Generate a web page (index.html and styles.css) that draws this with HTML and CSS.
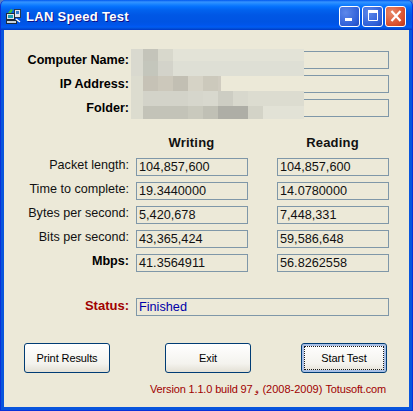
FILE: index.html
```html
<!DOCTYPE html>
<html lang="en">
<head>
<meta charset="utf-8">
<title>LAN Speed Test</title>
<link rel="stylesheet" href="styles.css">
</head>
<body>
<div class="window">
  <header class="titlebar">
    <svg class="app-icon" width="17" height="17" viewBox="0 0 17 17">
      <rect x="9.500" y="1.500" width="6" height="8" fill="#dfe6ee" stroke="#26384a"/>
      <rect x="11" y="3" width="3" height="3" fill="#2f79c9"/>
      <path d="M3 5 L6 1 L8 2 L6 5Z" fill="#3fbf3f"/>
      <rect x="1.500" y="5.500" width="8" height="6" fill="#dfe6ee" stroke="#1d2b3a"/>
      <rect x="3" y="7" width="5" height="3" fill="#18a0b8"/>
      <rect x="1.500" y="12.500" width="10" height="3" fill="#c9d2dc" stroke="#1d2b3a"/>
      <path d="M11 11 L15 14" stroke="#fff" stroke-width="1.500"/>
    </svg>
    <h1 class="title">LAN Speed Test</h1>
    <div class="controls">
      <span class="ctl ctl-min"><svg width="18" height="18" viewBox="0 0 18 18"><rect x="4" y="11" width="7" height="3" fill="#fff"/></svg></span>
      <span class="ctl ctl-max"><svg width="18" height="18" viewBox="0 0 18 18"><path d="M4.500 3.500h9v10h-9z" fill="none" stroke="#fff"/><rect x="4" y="3" width="10" height="3" fill="#fff"/></svg></span>
      <span class="ctl ctl-close"><svg width="18" height="18" viewBox="0 0 18 18"><path d="M4.500 4 L13.500 14 M13.500 4 L4.500 14" stroke="#fff" stroke-width="2.200"/></svg></span>
    </div>
  </header>
  <main class="client">
    <section class="info">
      <div class="info-row"><label class="label strong">Computer Name:</label><div class="field"></div></div>
      <div class="info-row"><label class="label strong">IP Address:</label><div class="field"></div></div>
      <div class="info-row"><label class="label strong">Folder:</label><div class="field"></div></div>
    </section>
    <section class="metrics">
      <div></div><div class="col-head">Writing</div><div class="col-head">Reading</div>
      <div class="label raised">Packet length:</div><div class="field">104,857,600</div><div class="field">104,857,600</div>
      <div class="label raised">Time to complete:</div><div class="field">19.3440000</div><div class="field">14.0780000</div>
      <div class="label raised">Bytes per second:</div><div class="field">5,420,678</div><div class="field">7,448,331</div>
      <div class="label raised">Bits per second:</div><div class="field">43,365,424</div><div class="field">59,586,648</div>
      <div class="label raised strong">Mbps:</div><div class="field">41.3564911</div><div class="field">56.8262558</div>
    </section>
    <section class="info-row status-row">
      <div class="label strong status-label">Status:</div><div class="field status-value">Finished</div>
    </section>
    <section class="actions">
      <button class="btn">Print Results</button>
      <button class="btn btn-exit">Exit</button>
      <button class="btn btn-start">Start Test</button>
    </section>
    <footer class="version">Version 1.1.0 build 97 <bdi class="mark">و</bdi> (2008-2009) Totusoft.com</footer>
  </main>
  <svg class="mosaic" width="173" height="70" viewBox="0 0 173 70" aria-hidden="true">
    <g>
      <rect x="0" y="0" width="12" height="12" fill="#d9d9cf"/><rect x="12" y="0" width="15" height="12" fill="#c4c4ba"/><rect x="27" y="0" width="15" height="12" fill="#d8d8cc"/><rect x="42" y="0" width="131" height="12" fill="#e3e3d7"/>
      <rect x="0" y="12" width="12" height="15" fill="#d9d9cf"/><rect x="12" y="12" width="15" height="15" fill="#c4c6bc"/><rect x="27" y="12" width="15" height="15" fill="#d3d3ca"/><rect x="42" y="12" width="131" height="15" fill="#dedfd5"/>
      <rect x="0" y="27" width="12" height="15" fill="#dcdccf"/><rect x="12" y="27" width="15" height="15" fill="#c6c2b6"/><rect x="27" y="27" width="15" height="15" fill="#ccc8bb"/><rect x="42" y="27" width="15" height="15" fill="#c2bfb3"/><rect x="57" y="27" width="15" height="15" fill="#d6d3c6"/><rect x="72" y="27" width="15" height="15" fill="#ccc9bc"/>
      <rect x="87" y="27" width="3" height="15" fill="#d0ccc0"/>
      <rect x="0" y="42" width="12" height="15" fill="#dcdccf"/><rect x="12" y="42" width="45" height="15" fill="#d3d3c9"/><rect x="57" y="42" width="15" height="15" fill="#d6d6cc"/><rect x="72" y="42" width="15" height="15" fill="#d8d8ce"/><rect x="87" y="42" width="15" height="15" fill="#cdcdc3"/><rect x="102" y="42" width="15" height="15" fill="#d8d8cd"/><rect x="117" y="42" width="56" height="15" fill="#dcdcd0"/>
      <rect x="0" y="57" width="12" height="13" fill="#dcdccf"/><rect x="12" y="57" width="45" height="13" fill="#c3c3b8"/><rect x="57" y="57" width="15" height="13" fill="#c9c9bd"/><rect x="72" y="57" width="15" height="13" fill="#c0c0b5"/><rect x="87" y="57" width="30" height="13" fill="#aeaea6"/><rect x="117" y="57" width="15" height="13" fill="#d3d3c7"/><rect x="132" y="57" width="41" height="13" fill="#e2e2d6"/>
    </g>
  </svg>
</div>
</body>
</html>
```
FILE: styles.css
```css
* { box-sizing: border-box; }
html, body { margin: 0; padding: 0; background: #5a7fc0; }
body { width: 413px; height: 411px; overflow: hidden; font-family: "Liberation Sans", Arial, sans-serif; }

.window {
  position: relative;
  width: 413px;
  height: 411px;
  display: flex;
  flex-direction: column;
  border-radius: 6px 6px 0 0;
  overflow: hidden;
  background: #0855dd;
  border: solid #0831d9;
  border-width: 0 1px 1px 1px;
}

.titlebar {
  height: 30px;
  margin: 0 -1px;
  flex: none;
  display: flex;
  align-items: center;
  padding: 0 7px 0 5px;
  background: linear-gradient(180deg, #0058ee 0, #3593ff 2px, #288eff 3px, #127dff 5px, #036ffc 7px, #0262ee 10px, #0057e5 15px, #0054e3 22px, #0055eb 25px, #005bf5 27px, #0256dd 28px, #0038c8 30px);
}
.app-icon { flex: none; margin-top: 2px; }
.title {
  margin: 2px 0 0 4px;
  font-size: 13px;
  font-weight: bold;
  letter-spacing: .3px;
  color: #fff;
  text-shadow: 1px 1px 0 #0f1089;
}
.controls { margin-left: auto; display: flex; gap: 2px; margin-top: 2px; }
.ctl {
  width: 21px;
  height: 21px;
  display: flex;
  align-items: center;
  justify-content: center;
  border: 1px solid #fff;
  border-radius: 3px;
}
.ctl-min, .ctl-max { background: radial-gradient(circle at 30% 30%, #5d88ea, #2f5fd8 70%, #2348b8); }
.ctl-close { background: radial-gradient(circle at 30% 30%, #e88a6a, #d9502e 65%, #b83418); }

.client {
  flex: 1;
  margin: 0 3px 3px;
  padding-top: 21px;
  display: flex;
  flex-direction: column;
  background: #ece9d8;
}

.info { display: flex; flex-direction: column; gap: 6px; }
.info-row { display: grid; grid-template-columns: 132px 253px; align-items: center; }

.label {
  padding-right: 7px;
  text-align: right;
  font-size: 12.600px;
  line-height: 18px;
  color: #111;
}
.label.strong { font-size: 12.600px; font-weight: bold; color: #000; }
.label.raised { margin-top: -2px; }
.info .label { margin-top: -1px; }

.field {
  height: 18px;
  border: 1px solid #7f97a8;
  padding-left: 2px;
  font-size: 12.700px;
  line-height: 17px;
  color: #111;
  white-space: nowrap;
  overflow: hidden;
}

.metrics {
  margin-top: 17px;
  display: grid;
  grid-template-columns: 132px 141px 112px;
  grid-auto-rows: 18px;
  row-gap: 6px;
}
.metrics .field { width: 112px; }
.col-head {
  width: 112px;
  padding-right: 1px;
  text-align: center;
  font-size: 13px;
  font-weight: bold;
  letter-spacing: .2px;
  line-height: 18px;
  color: #111;
}

.status-row { margin-top: 26px; }
.label.status-label { color: #a00000; margin-top: -3px; font-size: 13px; }
.status-value { color: #0000a8; }

.actions { margin-top: 27px; padding-left: 20px; display: flex; }
.btn {
  width: 86px;
  height: 30px;
  padding: 0;
  border: 1px solid #003c74;
  border-radius: 3px;
  background: linear-gradient(180deg, #fff, #f4f3ee 70%, #e3e0d5);
  font-family: "Liberation Sans", Arial, sans-serif;
  font-size: 11px;
  letter-spacing: -.1px;
  color: #000;
}
.btn-exit { margin-left: 55px; }
.btn-start {
  margin-left: 50px;
  box-shadow: inset 0 0 0 2px #a9c0e6;
  outline: 1px dotted #1a1a1a;
  outline-offset: -4px;
}

.version {
  margin-top: 8px;
  padding-right: 23px;
  text-align: right;
  font-size: 11px;
  line-height: 16px;
  letter-spacing: -.15px;
  color: #a00000;
}
.mark { font-size: 8px; }

.mosaic { position: absolute; left: 130px; top: 49px; }
```
